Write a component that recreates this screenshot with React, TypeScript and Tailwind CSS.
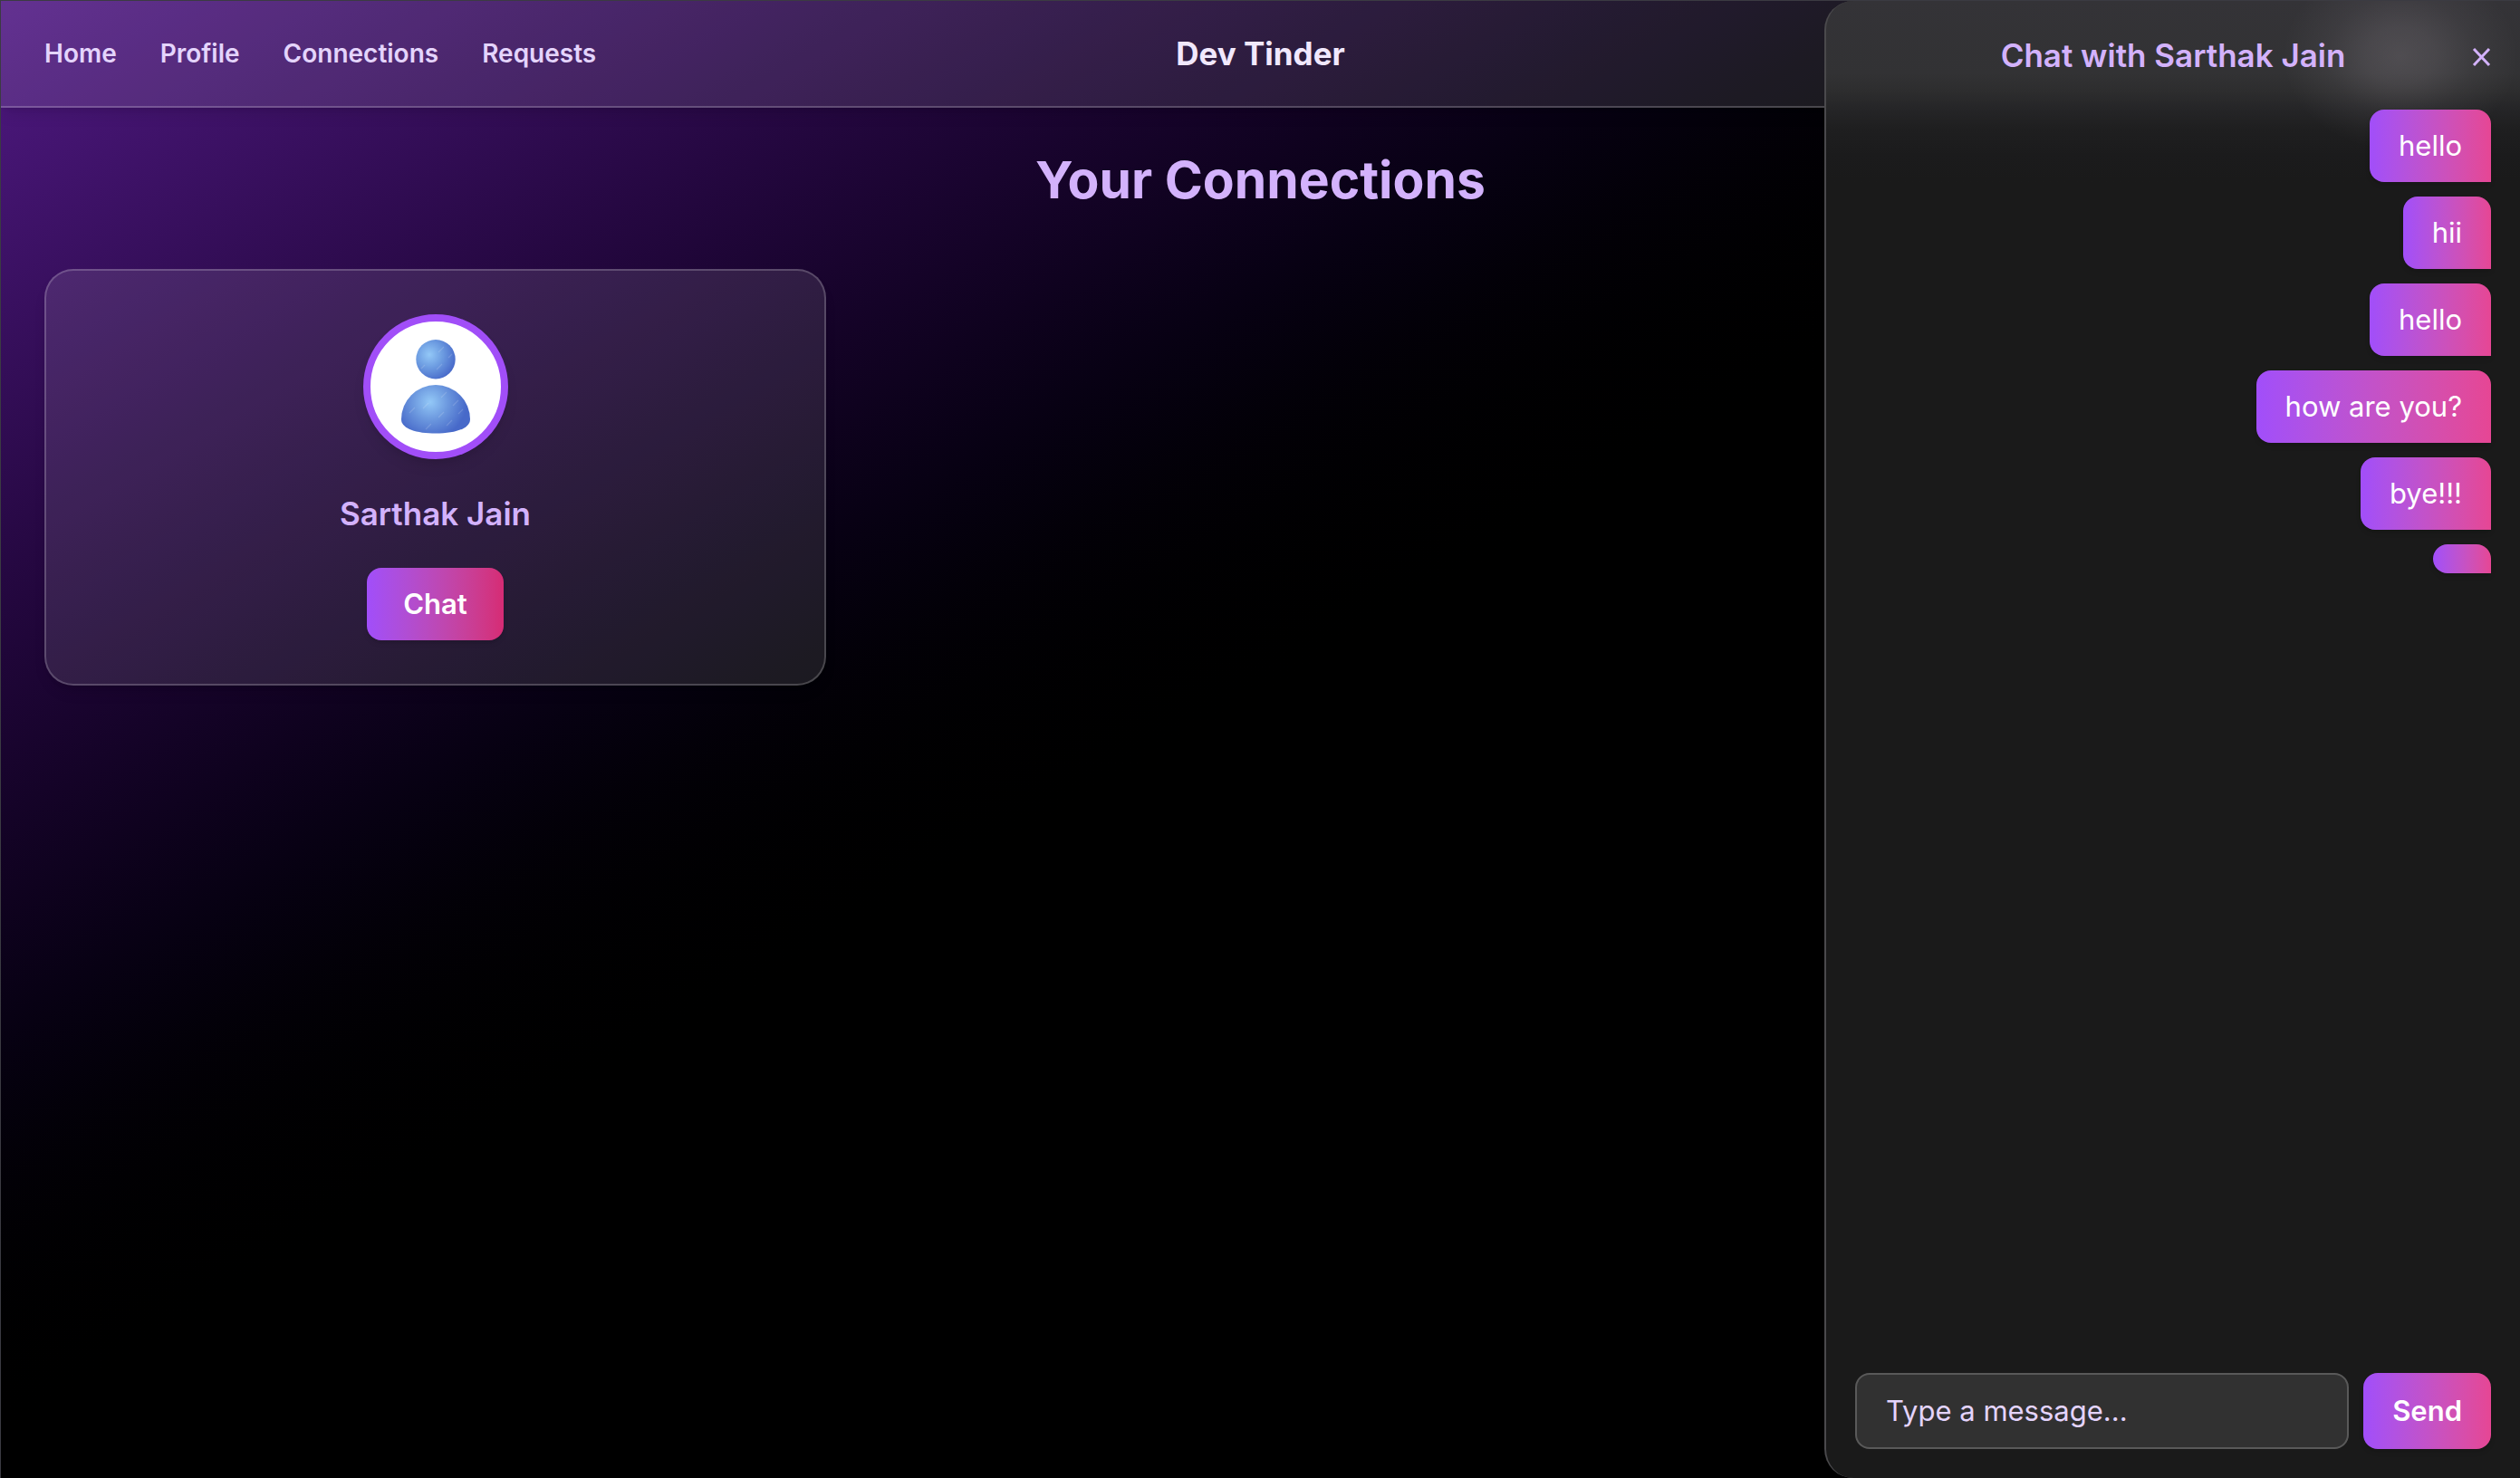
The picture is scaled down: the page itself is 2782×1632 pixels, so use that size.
import { useState } from "react";

const links = ["Home", "Profile", "Connections", "Requests"];
const messages = ["hello", "hii", "hello", "how are you?", "bye!!!", ""];

function Avatar() {
  return (
    <div className="size-40 overflow-hidden rounded-full border-8 border-[#a14ef8] bg-white shadow-lg">
      <svg viewBox="0 0 144 144" className="size-full" role="img" aria-label="Profile picture">
        <defs>
          <radialGradient id="head" cx="0.34" cy="0.38" r="0.7">
            <stop offset="0" stopColor="#93c8f7" />
            <stop offset="0.5" stopColor="#6b9ae0" />
            <stop offset="1" stopColor="#4769c9" />
          </radialGradient>
          <radialGradient id="body" gradientUnits="userSpaceOnUse" cx="66" cy="89" r="40">
            <stop offset="0" stopColor="#93c8f7" />
            <stop offset="0.5" stopColor="#6b97de" />
            <stop offset="1" stopColor="#4769c9" />
          </radialGradient>
        </defs>
        <circle cx="72" cy="41.7" r="21.7" fill="url(#head)" />
        <path
          d="M34 108A38 38 0 0 1 110 108C110 118.500 93 123.600 72 123.600C51 123.600 34 118.500 34 108Z"
          fill="url(#body)"
        />
        <path
          d="M75 34l6-6M86 40l4-4M73 53l6-6M56 52l4-4M78 84l6-6M91 93l6-6M43 101l6-6M58 96l6-6M75 106l6-6M97 102l5-5M61 119l6-6M84 115l6-6"
          stroke="#fff"
          strokeOpacity="0.15"
          strokeWidth="1.2"
        />
      </svg>
    </div>
  );
}

function Navbar() {
  return (
    <nav className="grid grid-cols-[1fr_auto_1fr] items-center border-b-2 border-white/20 bg-white/10 px-12 py-[30px] shadow-lg">
      <ul className="flex gap-12">
        {links.map((link) => (
          <li key={link}>
            <a href="#" className="text-[28px] leading-10 font-semibold text-[#e4d4fc]">
              {link}
            </a>
          </li>
        ))}
      </ul>
      <a href="#" className="text-[35px] leading-[56px] font-bold text-[#f1e8fd]">
        Dev Tinder
      </a>
    </nav>
  );
}

function ConnectionCard({ name, onChat }: { name: string; onChat: () => void }) {
  return (
    <article className="flex flex-col items-center rounded-[32px] border-2 border-white/20 bg-white/10 p-12 shadow-lg">
      <Avatar />
      <h2 className="my-8 text-[35px] leading-[56px] font-semibold text-[#d3b2fc]">{name}</h2>
      <button
        type="button"
        onClick={onChat}
        className="rounded-2xl bg-linear-to-r from-[#a14efa] to-[#d62b74] px-10 py-4 text-[31px] leading-12 font-semibold text-white shadow-md"
      >
        Chat
      </button>
    </article>
  );
}

function ChatDrawer({ name, onClose }: { name: string; onClose: () => void }) {
  return (
    <aside className="absolute inset-y-0 right-0 flex w-3xl flex-col rounded-l-[32px] border-l-2 border-[#4a494c] bg-[#1a1a1a] bg-[radial-gradient(130px_105px_at_calc(100%-132px)_61px,#ffeeff24,#ffeeff1c_30%,#ffeeff0c_62%,#ffeeff00),linear-gradient(to_bottom,#343337,#323234_80px,#2d2d2e_100px,#252527_120px,#1f1f20_140px,#1b1b1c_170px,#1a1a1a_200px)] p-8">
      <header className="mb-8 grid grid-cols-[1fr_auto_1fr] items-center">
        <h2 className="col-start-2 text-[35px] leading-[56px] font-semibold text-[#d3b2fc]">
          Chat with {name}
        </h2>
        <button type="button" aria-label="Close chat" onClick={onClose} className="mt-1 justify-self-end text-[#d3b2fc]">
          <svg viewBox="0 0 22 22" className="size-[22px]" fill="none" stroke="currentColor" strokeWidth="3">
            <path d="M3 2L20 20M20 2L3 20" />
          </svg>
        </button>
      </header>
      <ul className="flex grow flex-col items-end gap-4">
        {messages.map((message, i) => (
          <li
            key={i}
            className="rounded-2xl rounded-br-none bg-linear-to-r from-[#a14efa] to-[#e64694] px-8 py-4 text-[31px] leading-12 text-white shadow-md"
          >
            {message}
          </li>
        ))}
      </ul>
      <form className="flex gap-4" onSubmit={(e) => e.preventDefault()}>
        <input
          type="text"
          aria-label="Message"
          placeholder="Type a message..."
          className="min-w-0 grow rounded-2xl border-2 border-white/20 bg-white/10 px-8 py-4 text-[31px] leading-12 text-white placeholder:text-[#e4d4fc]"
        />
        <button
          type="submit"
          className="rounded-2xl bg-linear-to-r from-[#a14efa] to-[#e64694] px-8 py-4 text-[31px] leading-12 font-semibold text-white shadow-md"
        >
          Send
        </button>
      </form>
    </aside>
  );
}

export default function App() {
  const [open, setOpen] = useState(true);
  return (
    <div className="relative min-h-screen overflow-hidden border-t border-l border-[#3b3b42] bg-linear-to-br from-[#511a85] via-black to-black font-['Inter',sans-serif]">
      <Navbar />
      <main className="px-12 pt-11">
        <h1 className="mb-[62px] text-center text-[57px] leading-[72px] font-bold text-[#d3b2fc]">
          Your Connections
        </h1>
        <div className="grid grid-cols-3 gap-12">
          <ConnectionCard name="Sarthak Jain" onChat={() => setOpen(true)} />
        </div>
      </main>
      {open && <ChatDrawer name="Sarthak Jain" onClose={() => setOpen(false)} />}
    </div>
  );
}
